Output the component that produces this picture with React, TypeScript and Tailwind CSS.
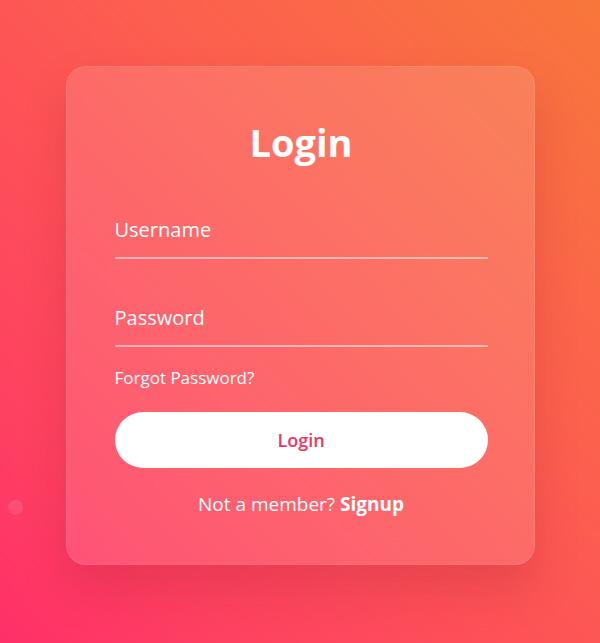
import { useState } from 'react';

export default function App() {
  const [username, setUsername] = useState('');
  const [password, setPassword] = useState('');

  return (
    <div className="relative flex h-[643px] w-full items-center justify-center overflow-hidden bg-gradient-to-tr from-[#ff2f68] via-[#fd5654] to-[#f8763a] font-['Open_Sans',sans-serif]">
      {/* soft blobs */}
      <div className="absolute left-[8px] top-[500px] h-[15px] w-[15px] rounded-full bg-white/10" />

      <div className="relative z-10 mb-[12px] flex h-[499px] w-[469px] flex-col rounded-[20px] border border-white/10 bg-white/[0.12] pl-12 pr-[46px] pt-[53px] shadow-[0_25px_45px_rgba(150,20,40,0.2)]">
        <h1 className="text-center text-[38px] font-bold leading-[44px] text-white">Login</h1>

        <input
          value={username}
          onChange={e => setUsername(e.target.value)}
          placeholder="Username"
          className="mt-[37px] h-[58px] w-full border-b-2 border-white/50 bg-transparent text-[20px] text-white outline-none placeholder:text-white"
        />
        <input
          type="password"
          value={password}
          onChange={e => setPassword(e.target.value)}
          placeholder="Password"
          className="mt-[30px] h-[58px] w-full border-b-2 border-white/50 bg-transparent text-[20px] text-white outline-none placeholder:text-white"
        />

        <a href="#" className="mt-[19px] text-[17px] leading-[24px] text-white">Forgot Password?</a>

        <button className="mt-[22px] h-[56px] w-full rounded-full bg-white text-[18px] font-semibold text-[#f3335f]">
          Login
        </button>

        <p className="mt-[23px] text-center text-[19px] leading-[27px] text-white">
          Not a member? <a href="#" className="font-bold">Signup</a>
        </p>
      </div>
    </div>
  );
}
